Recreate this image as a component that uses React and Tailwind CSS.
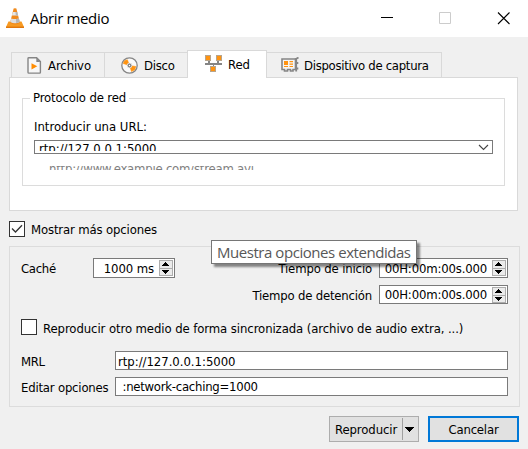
import React from "react";

function Cone() {
  return (
    <svg width="18" height="21" viewBox="0 0 18 21">
      <path d="M2.500 13.500h13L18 19H0z" fill="#f79a22" />
      <path d="M0 18.600h18V20H0z" fill="#e0760c" />
      <path d="M7.600.6q1.400-.8 2.800 0L14 15q-5 2.800-10 0z" fill="#f08a1c" />
      <path d="M6.800 4h4.400l.9 3.600H5.900z" fill="#e6e6e6" />
      <path d="M5.200 10.400q3.800 1.200 7.600 0l1 3.600q-4.800 2.400-9.600 0z" fill="#dedede" />
      <path d="M9.500 4h1.700l.9 3.600H9.800zM10 11l2.800-.6 1 3.600-3.600 1.200z" fill="#b5b5b5" />
    </svg>
  );
}

function FileIcon() {
  return (
    <svg width="15" height="17" viewBox="0 0 15 17">
      <path d="M1 1.500Q1 .8 1.800.8H9.600L13.400 4.600V15.300q0 .8-.8.8H1.800q-.8 0-.8-.8z" fill="#f7f7f7" stroke="#858585" strokeWidth="1.4" />
      <path d="M9.300.8v4.100h4.100z" fill="#858585" />
      <path d="M4.500 6.200v6.200l5.800-3.100z" fill="#ff8c00" />
    </svg>
  );
}

function DiscIcon() {
  return (
    <svg width="17" height="17" viewBox="0 0 17 17">
      <circle cx="8.5" cy="8.5" r="7.7" fill="#fafafa" stroke="#858585" strokeWidth="1.3" />
      <path d="M8.500 8.500L2.200 6.500L3.500 3.800L6.400 2.800zM8.500 8.500L14.800 9.500L13.700 12.800L10.500 14.500z" fill="#ff9310" stroke="#ff9310" strokeWidth=".6" />
      <circle cx="8.5" cy="8.5" r="2.4" fill="#858585" stroke="#eee" strokeWidth=".8" />
      <circle cx="8.5" cy="8.5" r=".7" fill="#fff" />
    </svg>
  );
}

function NetworkIcon() {
  return (
    <svg width="17" height="17" viewBox="0 0 17 17" shapeRendering="crispEdges">
      <path d="M0 8h17v2H0zM3 5h2v4H3zM12 5h2v4h-2zM8 9h1v3H8z" fill="#858585" />
      <path d="M0 0h6v6H0zM11 0h6v6h-6zM5 11h6v6H5z" fill="#b7a48b" />
      <path d="M1 1h4v4H1zM12 1h4v4h-4zM6 12h4v4H6z" fill="#ff9310" />
    </svg>
  );
}

function CaptureIcon() {
  return (
    <svg width="18" height="16" viewBox="0 0 18 16">
      <path d="M1 2h13.500v10.500H12V14H9.500v-1.500H6.500V14H3.500v-1.500H1z" fill="#f5f5f5" stroke="#858585" strokeWidth="1.6" />
      <path d="M14 2.500L17.500.5M15.200 2v12.500M15 6h2.300M15 11.500h2.300" stroke="#858585" strokeWidth="1.8" fill="none" />
      <path d="M3 4h4v4H3zM8.500 4H12v1.200H8.500zM8.500 6.500H12v1.200H8.500zM3 9h4v1H3zM8.500 9H12v1H8.500z" fill="#ff9310" />
    </svg>
  );
}

function Spin({ children, className }) {
  return (
    <div className={`flex items-center justify-end border border-[#7a7a7a] bg-white pr-px ${className}`}>
      <span className="mr-[5px] pt-px">{children}</span>
      <svg width="14" height="16" viewBox="0 0 14 16" shapeRendering="crispEdges">
        <path d="M0 0h14v16H0z" fill="#adadad" />
        <path d="M1 1h12v7H1zM1 9h12v6H1z" fill="#ebebeb" />
        <path d="M6 2h1v1h1v1h1v1h1v1H3V5h1V4h1V3h1zM3 10h7v1H9v1H8v1H7v1H6v-1H5v-1H4v-1H3z" fill="#000" />
      </svg>
    </div>
  );
}

export default function App() {
  return (
    <div className="relative flex h-[449px] w-[528px] flex-col overflow-hidden whitespace-pre bg-[#f0f0f0] font-['DejaVu_Sans_Condensed','DejaVu_Sans',sans-serif] text-[13px] leading-4 tracking-[-0.1px] text-black [font-stretch:condensed]">
      <header className="flex h-[37px] shrink-0 items-center bg-white pl-[6px]">
        <Cone />
        <h1 className="-mt-px ml-[6px] font-['Open_Sans',sans-serif] text-[15px] leading-5 tracking-[-0.35px] [font-stretch:normal]">Abrir medio</h1>
        <svg className="ml-auto mr-[18px]" width="130" height="13" viewBox="0 0 130 13" fill="none">
          <path d="M1 5.500h12" stroke="#000" />
          <path d="M59.500.5h11v11h-11z" stroke="#ccc" />
          <path d="M118 .5l11.500 11.500M129.500.5L118 12" stroke="#000" strokeWidth="1.1" />
        </svg>
      </header>

      <nav className="mt-[13px] flex h-[28px] shrink-0 items-end pl-[11px]">
        <div className="flex h-[26px] w-[93px] items-center border border-r-0 border-[#d9d9d9] pl-[15px]">
          <FileIcon /><span className="ml-[6px] pt-[2px]">Archivo</span>
        </div>
        <div className="flex h-[26px] w-[83px] items-center border border-r-0 border-[#d9d9d9] pl-4">
          <DiscIcon /><span className="ml-[6px] pt-[2px] tracking-[-0.25px]">Disco</span>
        </div>
        <div className="z-10 flex h-[28px] w-[80px] items-center border border-b-0 border-[#d9d9d9] bg-white pb-[3px] pl-[17px]">
          <NetworkIcon /><span className="ml-[6px] mt-[4px]">Red</span>
        </div>
        <div className="flex h-[26px] w-[175px] items-center border border-l-0 border-[#d9d9d9] pl-[14px]">
          <CaptureIcon /><span className="ml-[5px] pt-[2px] tracking-[-0.3px]">Dispositivo de captura</span>
        </div>
      </nav>

      <section className="-mt-px ml-[9px] h-[134px] w-[509px] shrink-0 border border-[#d9d9d9] bg-white px-3 pt-5">
        <div className="h-[88px] w-[483px] border border-[#dcdcdc] pl-[11px]">
          <div className="-ml-[4px] -mt-[9px] w-fit bg-white px-[3px] tracking-[-0.15px]">Protocolo de red</div>
          <div className="mt-[13px] tracking-[0px]">Introducir una URL:</div>
          <div className="mt-[5px] flex h-[14px] w-[459px] items-center border border-[#7a7a7a] pl-1 pr-[3px]">
            <div className="h-[8px] overflow-hidden"><div className="-mt-[2px] tracking-[-0.03px]">rtp://127.0.0.1:5000</div></div>
            <svg className="ml-auto" width="11" height="7" viewBox="0 0 11 7"><path d="M1 1l4.500 4.500L10 1" fill="none" stroke="#444" strokeWidth="1.1" /></svg>
          </div>
          <div className="ml-[15px] mt-[12px] h-1 overflow-hidden text-[#808080]"><div className="-mt-[5px] tracking-[-0.22px]">http://www.example.com/stream.avi</div></div>
        </div>
      </section>

      <label className="ml-[9px] mt-[10px] flex h-4 shrink-0 items-center">
        <span className="flex size-4 items-center justify-center border border-[#333] bg-white">
          <svg width="12" height="10" viewBox="0 0 12 10"><path d="M1 4.500L4.500 8 11 1.200" fill="none" stroke="#333" strokeWidth="1.3" /></svg>
        </span>
        <span className="ml-[6px] pt-[2px] tracking-[-0.15px]">Mostrar más opciones</span>
      </label>

      <section className="ml-[9px] mt-[9px] flex h-[161px] w-[511px] shrink-0 flex-col border border-[#dcdcdc] pl-[11px] pr-[11px] pt-[11px]">
        <div className="flex h-5 items-center">
          <span className="w-[72px] pt-[2px] tracking-[-0.3px]">Caché</span>
          <Spin className="h-5 w-[82px]">1000 ms</Spin>
          <span className="ml-auto mr-[7px] pt-[2px] tracking-[-0.15px]">Tiempo de inicio</span>
          <Spin className="h-5 w-[129px] tracking-[-0.17px]">00H:00m:00s.000</Spin>
        </div>
        <div className="mt-[7px] flex h-[19px] items-center justify-end">
          <span className="mr-[7px] pt-[2px] tracking-[-0.2px]">Tiempo de detención</span>
          <Spin className="h-[19px] w-[129px] tracking-[-0.17px]">00H:00m:00s.000</Spin>
        </div>
        <label className="mt-[15px] flex h-4 items-center">
          <span className="size-4 border border-[#333] bg-white" />
          <span className="ml-[6px] pt-[3px] tracking-[-0.09px]">Reproducir otro medio de forma sincronizada (archivo de audio extra, ...)</span>
        </label>
        <div className="mt-4 flex h-[19px] items-center">
          <span className="w-[94px] pt-[2px] tracking-[-0.4px]">MRL</span>
          <div className="h-[19px] flex-1 border border-[#7a7a7a] bg-white pl-[2px] pt-[2px] tracking-[-0.03px]">rtp://127.0.0.1:5000</div>
        </div>
        <div className="mt-[7px] flex h-[19px] items-center">
          <span className="w-[94px] pt-[2px] tracking-[-0.2px]">Editar opciones</span>
          <div className="h-[19px] flex-1 border border-[#7a7a7a] bg-white pl-[3px] pt-px tracking-[-0.26px]"> :network-caching=1000</div>
        </div>
      </section>

      <footer className="mt-[9px] flex h-[26px] shrink-0 justify-end gap-[9px] pr-[9px]">
        <button className="flex w-[90px] items-center border border-[#adadad] bg-[#e1e1e1] pl-[5px]">
          <span className="pt-px">Reproducir</span>
          <span className="ml-auto flex h-[22px] w-4 items-center border-l border-[#a0a0a0] pl-[2px]">
            <svg width="9" height="5" viewBox="0 0 9 5" shapeRendering="crispEdges"><path d="M0 0h9v1H8v1H7v1H6v1H5v1H4V4H3V3H2V2H1V1H0z" /></svg>
          </span>
        </button>
        <button className="w-[91px] border-2 border-[#0078d7] bg-[#e1e1e1] pt-px tracking-[-0.2px]">Cancelar</button>
      </footer>

      <div className="absolute left-[211px] top-[240px] z-20 h-[24px] w-[206px] border border-[#767676] bg-white pl-[5px] font-['Open_Sans',sans-serif] text-[15px] leading-[23px] tracking-[-0.45px] text-[#575757] shadow-[3px_3px_2px_rgba(0,0,0,0.45)] [font-stretch:normal]">Muestra opciones extendidas</div>
    </div>
  );
}
